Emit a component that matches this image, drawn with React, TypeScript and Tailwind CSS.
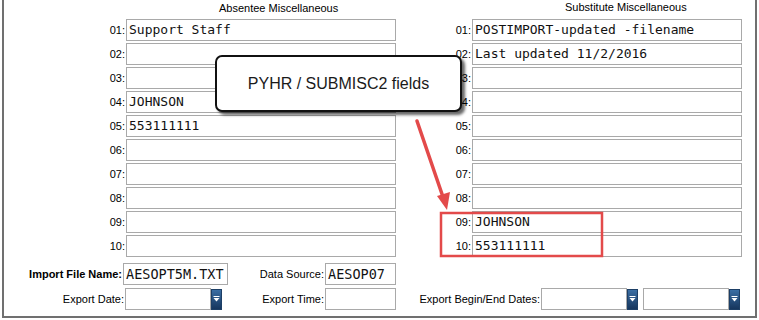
import * as React from 'react'

const absentee = ['Support Staff', '', '', 'JOHNSON', '553111111', '', '', '', '', '']
const substitute = [
  'POSTIMPORT-updated -filename',
  'Last updated 11/2/2016',
  '',
  '',
  '',
  '',
  '',
  '',
  'JOHNSON',
  '553111111',
]

const sans = { fontFamily: '"Liberation Sans", Arial, sans-serif' }
const mono = { fontFamily: '"DejaVu Sans Mono", "Liberation Mono", monospace' }

const TextBox = ({ value, className }: { value?: string; className: string }) => (
  <div
    className={
      'flex items-center h-[22px] border border-[#a9a9a9] bg-white pl-[2px] text-[13px] text-[#111] whitespace-nowrap overflow-hidden ' +
      className
    }
    style={mono}
  >
    {value}
  </div>
)

const DropButton = () => (
  <div className="flex items-center justify-center w-[11px] h-[21px] bg-gradient-to-b from-[#3b6ea3] to-[#16365e] border border-[#1d3f66]">
    <svg width="7" height="6" viewBox="0 0 7 6">
      <rect x="0.5" y="0" width="6" height="1" fill="#fff" />
      <polygon points="0.5,2 6.5,2 3.5,5.5" fill="#fff" />
    </svg>
  </div>
)

const DateBox = () => (
  <div className="flex items-center">
    <div className="h-[22px] w-[86px] border border-[#a9a9a9] bg-white" />
    <DropButton />
  </div>
)

const Row = ({
  num,
  value,
  labelWidth,
}: {
  num: number
  value: string
  labelWidth: string
}) => (
  <div className="flex items-center h-[22px]">
    <div className={'text-right pr-[1px] text-[11px] text-black ' + labelWidth} style={sans}>
      {String(num).padStart(2, '0')}:
    </div>
    <TextBox value={value} className="w-[270px]" />
  </div>
)

const App: React.FunctionComponent = () => {
  return (
    <div className="relative w-[759px] h-[320px] bg-white overflow-hidden" style={sans}>
      <div className="ml-[2px] w-[755px] h-[318px] border-x-2 border-b-2 border-[#707070] flex flex-col">
        <div className="flex">
          <div className="w-[392px] flex flex-col">
            <div className="h-[19px] pl-[215px] pt-[2px] text-[11px] leading-[13px] text-black">
              Absentee Miscellaneous
            </div>
            <div className="flex flex-col gap-[2px]">
              {absentee.map((v, i) => (
                <Row key={i} num={i + 1} value={v} labelWidth="w-[122px]" />
              ))}
            </div>
          </div>
          <div className="w-[346px] flex flex-col">
            <div className="h-[19px] pl-[169px] pt-[1px] text-[11px] leading-[13px] text-black">
              Substitute Miscellaneous
            </div>
            <div className="flex flex-col gap-[2px]">
              {substitute.map((v, i) => (
                <Row key={i} num={i + 1} value={v} labelWidth="w-[76px]" />
              ))}
            </div>
          </div>
        </div>

        <div className="flex items-center h-[22px] mt-[6px] text-[11px] text-black">
          <div className="w-[119px] text-right pr-[1px] font-bold">Import File Name:</div>
          <TextBox value="AESOPT5M.TXT" className="w-[105px] !text-[13.5px]" />
          <div className="w-[97px] text-right pr-[1px]">Data Source:</div>
          <TextBox value="AESOP07" className="w-[71px] !text-[13.5px]" />
        </div>

        <div className="flex items-center h-[22px] mt-[3px] text-[11px] text-black">
          <div className="w-[121px] text-right pr-[1px]">Export Date:</div>
          <DateBox />
          <div className="w-[103px] text-right pr-[1px]">Export Time:</div>
          <TextBox className="w-[71px]" />
          <div className="w-[145px] text-right pr-[1px]">Export Begin/End Dates:</div>
          <DateBox />
          <div className="w-[5px]" />
          <DateBox />
        </div>
      </div>

      {/* callout */}
      <div className="absolute left-[215px] top-[55px] w-[247px] h-[57px] rounded-[7px] border-2 border-[#111] bg-white shadow-[3px_3px_3px_rgba(0,0,0,0.6)] flex items-center justify-center">
        <span className="text-[16px] text-[#1a1a1a]">PYHR / SUBMISC2 fields</span>
      </div>

      {/* arrow + highlight */}
      <svg className="absolute left-0 top-0 pointer-events-none" width="759" height="320">
        <line x1="417" y1="121" x2="443" y2="197" stroke="#e34a4a" strokeWidth="3.5" strokeLinecap="round" />
        <polygon points="447,210 437,196 450,192" fill="#e34a4a" />
        <rect x="441" y="213" width="161" height="43" fill="none" stroke="#e34a4a" strokeWidth="2.5" />
      </svg>
    </div>
  )
}

export default App
